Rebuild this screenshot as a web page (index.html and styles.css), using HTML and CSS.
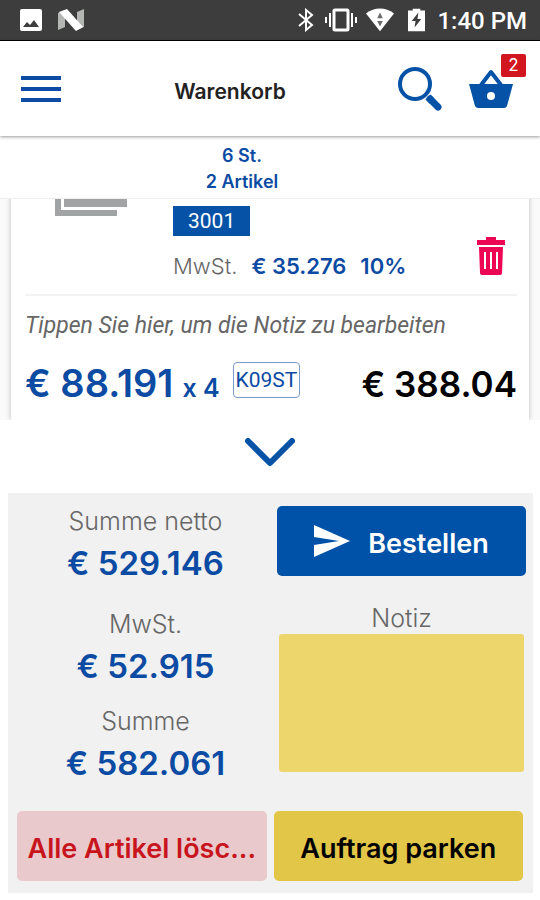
FILE: index.html
```html
<!DOCTYPE html>
<html lang="de">
<head>
  <meta charset="UTF-8" />
  <meta name="viewport" content="width=device-width, initial-scale=1" />
  <title>Warenkorb</title>
  <link rel="stylesheet" href="styles.css">
</head>
<body>
  <div class="status-bar">
    <div class="status-left">
      <svg width="24" height="24" viewBox="0 0 24 24">
        <rect x="1" y="1" width="22" height="22" rx="2" fill="#fff"/>
        <path d="M4 19l4-5 3 3 4-5 5 7z" fill="#3c3d3c"/>
      </svg>
      <svg width="26" height="24" viewBox="0 0 26 24">
        <path d="M0 5l7-3v17l-7 3zM19 4l7-3v18l-7 3z" fill="#b4b6b4"/>
        <path d="M1 4l8-3 16 18-7 4z" fill="#fff"/>
      </svg>
    </div>
    <div class="status-right">
      <svg width="16" height="24" viewBox="0 0 16 24" fill="none" stroke="#fff" stroke-width="2">
        <path d="M1 6l13 11-6 5V2l6 5L1 18"/>
      </svg>
      <svg class="vibrate" width="32" height="24" viewBox="0 0 32 24" fill="none" stroke="#fff">
        <rect x="9" y="2" width="14" height="20" rx="1" stroke-width="3"/>
        <path d="M5 5v14M27 5v14M1 9v6M31 9v6" stroke-width="2"/>
      </svg>
      <svg class="wifi" width="28" height="24" viewBox="0 0 30 24">
        <path d="M0 5C9-2 21-2 30 5L15 24z" fill="#fff"/>
        <path d="M15 4l3 6h-6zM15 19l-3-6h6z" fill="#6b6c6b"/>
      </svg>
      <svg class="battery" width="17" height="24" viewBox="0 0 18 24">
        <path d="M5 0h8v2h5v22H0V2h5z" fill="#fff"/>
        <path d="M11 4l-7 9h4l-1 7 7-9h-4z" fill="#3c3d3c"/>
      </svg>
      <span class="clock">1:40 PM</span>
    </div>
  </div>

  <header class="header">
    <button class="icon-btn menu-btn" aria-label="Menü">
      <svg width="40" height="28" viewBox="0 0 40 28" stroke="#0b4ba3" stroke-width="4">
        <path d="M0 3h40M0 14h40M0 25h40"/>
      </svg>
    </button>
    <h1>Warenkorb</h1>
    <div class="header-actions">
      <button class="icon-btn" aria-label="Suchen">
        <svg width="44" height="44" viewBox="0 0 44 44" fill="none" stroke="#0652a7">
          <circle cx="17" cy="17" r="15" stroke-width="4"/>
          <path d="M32 32l8 8" stroke-width="7" stroke-linecap="round"/>
          <path d="M30 30l4 4" stroke-width="7"/>
        </svg>
      </button>
      <button class="icon-btn basket-btn" aria-label="Warenkorb">
        <svg width="44" height="39" viewBox="0 0 44 39">
          <path d="M12 16l10-13 10 13" fill="none" stroke="#0652a7" stroke-width="4" stroke-linejoin="round"/>
          <path d="M0 15h44l-6 22q-1 2-3 2H9q-2 0-3-2z" fill="#0652a7"/>
          <circle cx="22" cy="27" r="4" fill="#fff"/>
        </svg>
        <span class="badge">2</span>
      </button>
    </div>
  </header>

  <div class="count">
    <div>6 St.</div>
    <div>2 Artikel</div>
  </div>

  <main class="list">
    <div class="item">
      <div class="item-top">
        <svg class="item-img" width="72" height="72" viewBox="0 0 72 72" fill="#a1a4a4">
          <path d="M0 9h6v57h56v6H0z"/>
          <path d="M9 0h63v63H9z"/>
        </svg>
        <div class="item-info">
          <span class="sku">3001</span>
          <div class="tax">
            <span class="tax-label">MwSt.</span>
            <span>€ 35.276</span>
            <span>10%</span>
          </div>
        </div>
        <button class="icon-btn" aria-label="Löschen">
          <svg width="28" height="38" viewBox="0 0 28 38" fill="#ed0653">
            <path d="M0 3h9V0h10v3h9v5H0z"/>
            <path d="M2 10h24l-1 26q0 2-2 2H5q-2 0-2-2zM7 15v17h2V15zM13 15v17h2V15zM19 15v17h2V15z" fill-rule="evenodd"/>
          </svg>
        </button>
      </div>
      <div class="item-note">Tippen Sie hier, um die Notiz zu bearbeiten</div>
      <div class="item-price">
        <span class="price">€ 88.191</span>
        <span class="qty">x 4</span>
        <span class="unit">K09ST</span>
        <span class="total-price">€ 388.04</span>
      </div>
    </div>
  </main>

  <button class="icon-btn toggle-btn" aria-label="Summen ausblenden">
    <svg width="50" height="30" viewBox="0 0 50 30" fill="none" stroke="#0652a7" stroke-width="6" stroke-linecap="round" stroke-linejoin="round">
      <path d="M3 3l22 22L47 3"/>
    </svg>
  </button>

  <section class="panel">
    <div class="summary">
      <div class="total">
        <div class="label">Summe netto</div>
        <div class="value">€ 529.146</div>
      </div>
      <button class="btn btn-order">
        <svg width="36" height="32" viewBox="0 0 36 32" fill="#fff">
          <path d="M0 0l36 16L0 32V20l25-4L0 12z"/>
        </svg>
        <span>Bestellen</span>
      </button>
      <div class="totals">
        <div class="total">
          <div class="label">MwSt.</div>
          <div class="value">€ 52.915</div>
        </div>
        <div class="total">
          <div class="label">Summe</div>
          <div class="value">€ 582.061</div>
        </div>
      </div>
      <div class="note">
        <label class="label" for="note">Notiz</label>
        <textarea id="note"></textarea>
      </div>
    </div>
    <div class="actions">
      <button class="btn btn-delete">Alle Artikel lösc...</button>
      <button class="btn btn-park">Auftrag parken</button>
    </div>
  </section>
</body>
</html>
```
FILE: styles.css
```css
* {
  box-sizing: border-box;
}
body {
  margin: 0;
  height: 100vh;
  display: flex;
  flex-direction: column;
  background: #fff;
  font-family: Inter, "Liberation Sans", sans-serif;
  color: #000;
}
button {
  font-family: inherit;
  border: none;
  cursor: pointer;
}
svg {
  display: block;
  flex-shrink: 0;
}
.icon-btn {
  background: none;
  padding: 0;
}

/* Status bar */
.status-bar {
  display: flex;
  justify-content: space-between;
  align-items: center;
  height: 41px;
  flex-shrink: 0;
  padding: 0 13px 0 19px;
  background: #3c3d3c;
  border-bottom: 1px solid #000;
}
.status-left {
  display: flex;
  gap: 15px;
}
.status-right {
  display: flex;
  align-items: center;
}
.vibrate {
  margin-left: 11px;
}
.wifi {
  margin-left: 9px;
}
.battery {
  margin-left: 14px;
}
.clock {
  margin-left: 12px;
  padding-top: 2px;
  font-family: Roboto, sans-serif;
  font-size: 24px;
  font-weight: 500;
  line-height: 38px;
  color: #fff;
}

/* Header */
.header {
  display: grid;
  grid-template-columns: 1fr auto 1fr;
  align-items: center;
  height: 95px;
  flex-shrink: 0;
  padding: 0 27px 0 21px;
  box-shadow: 0 1px 3px rgba(0,0,0,0.4);
}
h1 {
  margin: 5px 0 0;
  padding-right: 74px;
  font-size: 21px;
  font-weight: 600;
  color: #222;
}
.header-actions {
  display: flex;
  justify-content: flex-end;
  gap: 27px;
}
.menu-btn {
  justify-self: start;
}
.basket-btn {
  position: relative;
  color: #fff;
}
.badge {
  position: absolute;
  top: -13px;
  right: -13px;
  width: 25px;
  height: 23px;
  border-radius: 2px;
  background: #d2161f;
  font-size: 17px;
  line-height: 23px;
}

.count {
  flex-shrink: 0;
  padding: 7px 0 3px;
  margin-right: 56px;
  font-size: 18px;
  font-weight: 600;
  line-height: 26px;
  text-align: center;
  color: #0b4ba3;
}

/* Article list */
.list {
  flex: 1;
  min-height: 0;
  display: flex;
  flex-direction: column;
  justify-content: flex-end;
  overflow: hidden;
  padding: 0 11px;
  background: #fafafa;
  border-top: 1px solid #eee;
}
.item {
  flex-shrink: 0;
  padding: 0 12px 2px 14px;
  background: #fff;
  box-shadow: 0 0 5px rgba(0,0,0,0.25);
}
.item-top {
  display: flex;
  align-items: flex-end;
  padding-bottom: 10px;
  border-bottom: 2px solid #f3f3f3;
}
.item-img {
  margin: 0 46px 68px 30px;
}
.item-info {
  flex: 1;
}
.item-top .icon-btn {
  margin: 0 12px 9px 0;
}
.sku {
  display: inline-block;
  padding: 0 15px;
  background: #0652a7;
  font-family: Roboto, sans-serif;
  font-size: 21px;
  line-height: 30px;
  color: #fff;
}
.tax {
  display: flex;
  gap: 14px;
  margin-top: 12px;
  font-size: 22px;
  font-weight: 600;
  line-height: 36px;
  color: #0b4ba3;
}
.tax-label {
  font-weight: 300;
  color: #666;
}
.item-note {
  padding: 12px 0 10px;
  font-family: Roboto, sans-serif;
  font-size: 23px;
  font-style: italic;
  line-height: 36px;
  color: #666;
}
.item-price {
  display: flex;
  align-items: baseline;
  line-height: 59px;
  color: #0b4ba3;
}
.price {
  font-size: 38px;
  font-weight: 600;
}
.qty {
  margin-left: 9px;
  font-size: 25px;
  font-weight: 600;
}
.unit {
  align-self: flex-start;
  margin: 8px 0 0 13px;
  padding: 0 2px;
  border: 1px solid #7d9bcb;
  border-radius: 4px;
  font-family: Roboto, sans-serif;
  font-size: 21px;
  line-height: 34px;
}
.total-price {
  margin-left: auto;
  font-size: 35px;
  font-weight: 600;
  color: #000;
}

.toggle-btn {
  display: flex;
  justify-content: center;
  align-items: center;
  height: 73px;
  flex-shrink: 0;
  padding-bottom: 7px;
}

/* Bottom panel */
.panel {
  flex-shrink: 0;
  margin: 0 7px 7px 8px;
  padding: 11px 0 12px;
  background: #f1f1f1;
}
.summary {
  display: grid;
  grid-template-columns: 1fr 1fr;
  gap: 14px 7px;
  padding: 0 7px 0 13px;
}
.total {
  text-align: center;
}
.totals {
  display: flex;
  flex-direction: column;
  gap: 13px;
  padding-top: 5px;
}
.label {
  font-size: 25px;
  font-weight: 300;
  line-height: 34px;
  color: #666;
}
.value {
  font-size: 33px;
  font-weight: 600;
  line-height: 50px;
  color: #0b4ba3;
}
.btn {
  height: 70px;
  padding: 5px 8px 0;
  border-radius: 5px;
  font-size: 27px;
  font-weight: 600;
  white-space: nowrap;
}
.btn-order {
  display: flex;
  justify-content: center;
  align-items: center;
  gap: 18px;
  margin-top: 2px;
  padding-top: 0;
  background: #0052a8;
  color: #fff;
}
.btn-order span {
  padding-top: 5px;
}
.note {
  display: flex;
  flex-direction: column;
  align-items: center;
  padding: 0 2px;
}
.note .label {
  line-height: 32px;
}
.note textarea {
  width: 100%;
  height: 138px;
  padding: 8px;
  border: none;
  border-radius: 3px;
  background: #edd76d;
  font: inherit;
  font-size: 21px;
  resize: none;
}
.actions {
  display: grid;
  grid-template-columns: 1fr 1fr;
  gap: 7px;
  margin-top: 23px;
  padding: 0 10px 0 9px;
}
.btn-delete {
  background: #e9c9cb;
  color: #c8141c;
}
.btn-park {
  background: #e2c648;
  color: #000;
}
```
